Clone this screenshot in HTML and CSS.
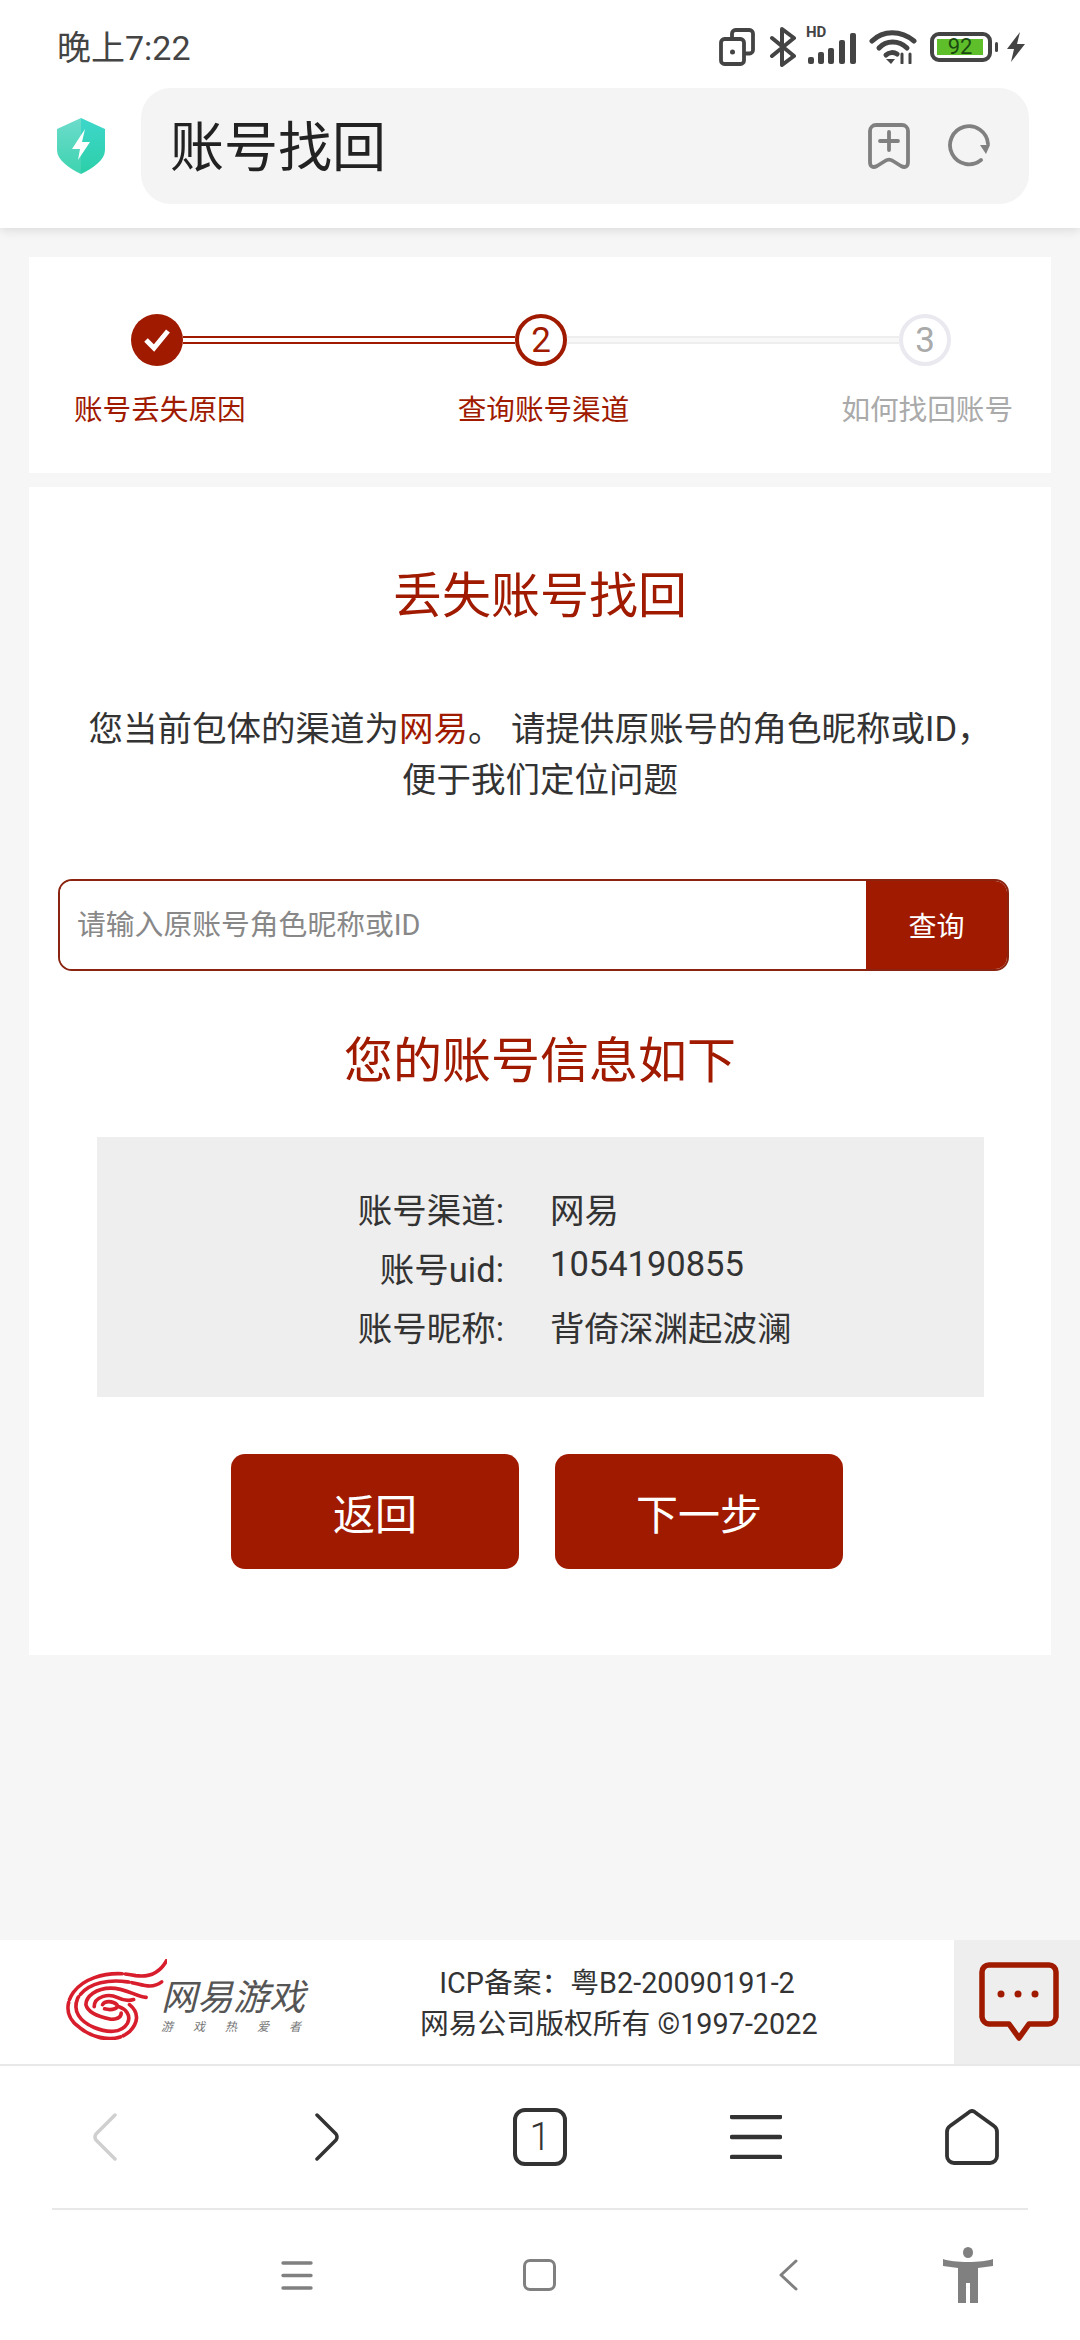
FILE: index.html
```html
<!DOCTYPE html>
<html lang="zh-CN">
<head>
    <meta charset="UTF-8">
    <meta name="viewport" content="width=device-width, initial-scale=1.0">
    <title>账号找回</title>
    <link rel="stylesheet" href="styles.css">
</head>
<body>
    <header class="browser-top">
        <div class="status-bar">
            <span class="status-time">晚上7:22</span>
            <div class="status-icons">
                <svg width="36" height="38" viewBox="0 0 36 38" fill="none" stroke="#444" stroke-width="3.8" stroke-linejoin="round" stroke-linecap="round">
                    <path d="M13 9V5.5A3.5 3.5 0 0 1 16.5 2H30.5A3.5 3.5 0 0 1 34 5.5V22A3.5 3.5 0 0 1 30.5 25.5H27"/>
                    <rect x="2" y="11" width="23" height="25" rx="3.5"/>
                    <circle cx="13.5" cy="24" r="2.5" fill="#444" stroke="none"/>
                </svg>
                <svg class="ic-bt" width="28" height="40" viewBox="0 0 28 40" fill="none" stroke="#444" stroke-width="4" stroke-linejoin="round" stroke-linecap="round">
                    <path d="M3 11L25 29L13 38V2L25 11L3 29"/>
                </svg>
                <div class="signal">
                    <span class="hd">HD</span>
                    <svg width="50" height="31" viewBox="0 0 50 31" fill="#444">
                        <rect x="1" y="24" width="6" height="7" rx="2"/>
                        <rect x="11" y="19" width="6" height="12" rx="2"/>
                        <rect x="21" y="15" width="6" height="16" rx="2"/>
                        <rect x="32" y="7" width="6" height="24" rx="2"/>
                        <rect x="43" y="0" width="6" height="31" rx="2"/>
                    </svg>
                </div>
                <svg class="ic-wifi" width="48" height="34" viewBox="0 0 48 34" fill="none" stroke="#444" stroke-width="5" stroke-linecap="round">
                    <path d="M3 11C14 0 32 0 45 11"/>
                    <path d="M10 18C17 10 30 10 38 18"/>
                    <path d="M17 25C20 22 25 22 28 24"/>
                    <path d="M17 29L22 34L26 29Z" fill="#444" stroke="none"/>
                    <path d="M33 24V33M41 24V33" stroke-width="3"/>
                </svg>
                <div class="battery">
                    <div class="battery-fill">92</div>
                </div>
                <span class="battery-nub"></span>
                <svg class="ic-bolt" width="20" height="30" viewBox="0 0 20 30" fill="#444">
                    <path d="M14 0L1 17H8L5 30L19 12H11Z"/>
                </svg>
            </div>
        </div>
        <div class="address-row">
            <svg class="shield" width="48" height="56" viewBox="0 0 48 56">
                <defs>
                    <linearGradient id="shieldLeft" x1="0" y1="0" x2="0" y2="1">
                        <stop offset="0" stop-color="#6ddccb"/>
                        <stop offset="1" stop-color="#3dd3b0"/>
                    </linearGradient>
                    <linearGradient id="shieldRight" x1="0" y1="0" x2="0" y2="1">
                        <stop offset="0" stop-color="#3ed7cb"/>
                        <stop offset="1" stop-color="#2ccfa8"/>
                    </linearGradient>
                </defs>
                <path d="M24 0L48 11V32C48 42 36 50 24 56Z" fill="url(#shieldRight)"/>
                <path d="M24 0L0 11V32C0 42 12 50 24 56Z" fill="url(#shieldLeft)"/>
                <path d="M28 11L15 31H23L21 42L33 24H25Z" fill="#fff"/>
            </svg>
            <div class="address-bar">
                <span class="address-title">账号找回</span>
                <svg width="42" height="46" viewBox="0 0 42 46" fill="none" stroke="#808080" stroke-width="3.8" stroke-linejoin="round" stroke-linecap="round">
                    <path d="M2 8A6 6 0 0 1 8 2H34A6 6 0 0 1 40 8V39C40 44 37 45 33 43L25 38C22 36 20 36 17 38L9 43C5 45 2 44 2 39Z"/>
                    <path d="M21 9V27M12 18H30"/>
                </svg>
                <svg class="ic-refresh" width="44" height="44" viewBox="0 0 44 44" fill="none" stroke="#808080" stroke-width="3.8" stroke-linecap="round">
                    <path d="M33 36A19 19 0 1 1 40 20"/>
                    <path d="M32 21H42L38 30Z" fill="#808080" stroke="none"/>
                </svg>
            </div>
        </div>
    </header>

    <main class="page">
        <section class="card steps">
            <div class="step-track">
                <span class="step-dot done">
                    <svg width="26" height="24" viewBox="0 0 26 24" fill="none" stroke="#fff" stroke-width="5"><path d="M2 12L10 20L24 3"/></svg>
                </span>
                <span class="step-line on"></span>
                <span class="step-dot current">2</span>
                <span class="step-line"></span>
                <span class="step-dot todo">3</span>
            </div>
            <div class="step-labels">
                <span class="on">账号丢失原因</span>
                <span class="on">查询账号渠道</span>
                <span>如何找回账号</span>
            </div>
        </section>

        <section class="card form-card">
            <h2>丢失账号找回</h2>
            <p class="intro">您当前包体的渠道为<span class="red">网易</span>。 请提供原账号的角色昵称或ID，<br>便于我们定位问题</p>
            <div class="search">
                <input type="text" placeholder="请输入原账号角色昵称或ID">
                <button>查询</button>
            </div>
            <h2 class="info-title">您的账号信息如下</h2>
            <div class="info-box">
                <div class="info-row"><span class="k">账号渠道:</span><span class="v">网易</span></div>
                <div class="info-row uid"><span class="k">账号uid:</span><span class="v">1054190855</span></div>
                <div class="info-row"><span class="k">账号昵称:</span><span class="v">背倚深渊起波澜</span></div>
            </div>
            <div class="actions">
                <button>返回</button>
                <button>下一步</button>
            </div>
        </section>
    </main>

    <footer class="site-footer">
        <div class="logo">
            <svg width="102" height="81" viewBox="2 0 98 78" fill="none" stroke="#d81e2c" stroke-width="3.5" stroke-linecap="round">
                <path d="M100 1C94 12 84 18 70 16C48 11 22 16 10 32C1 45 4 58 16 66C28 76 50 82 64 70C72 62 74 52 64 44" stroke-dasharray="46 3 60 3 70 3 200"/>
                <path d="M95 22C84 30 76 24 62 22C42 19 22 24 14 38C9 50 16 60 30 66C42 71 56 72 62 62C66 54 60 48 54 46" stroke-dasharray="30 3 50 3 200"/>
                <path d="M80 37C70 36 60 28 46 28C32 28 22 36 22 44C24 52 36 56 46 58C52 58 56 56 56 52"/>
                <path d="M30 46C30 36 44 33 52 37C58 40 62 41 68 39"/>
                <path d="M38 44C40 40 48 40 52 44C54 47 48 50 40 48"/>
            </svg>
            <div class="logo-text">
                <span class="logo-name">网易游戏</span>
                <span class="logo-slogan">游戏热爱者</span>
            </div>
        </div>
        <div class="footer-text">
            <div>ICP备案：粤B2-20090191-2</div>
            <div>网易公司版权所有 ©1997-2022</div>
        </div>
        <div class="chat-box">
            <svg width="80" height="80" viewBox="0 0 80 80" fill="none" stroke="#a01a00" stroke-width="5.5" stroke-linejoin="round">
                <path d="M10 3H70A7 7 0 0 1 77 10V55A8 8 0 0 1 69 62H50L40 76L30 62H10A8 8 0 0 1 3 55V10A7 7 0 0 1 10 3Z"/>
                <circle cx="22" cy="32" r="3.5" fill="#a01a00" stroke="none"/>
                <circle cx="39" cy="32" r="3.5" fill="#a01a00" stroke="none"/>
                <circle cx="56" cy="32" r="3.5" fill="#a01a00" stroke="none"/>
            </svg>
        </div>
    </footer>

    <nav class="browser-nav">
        <div class="nav-inner">
            <svg class="nav-back" width="26" height="48" viewBox="0 0 26 48" fill="none" stroke="#cfcfcf" stroke-width="3.5" stroke-linecap="round" stroke-linejoin="round"><path d="M23 2L4 21Q2 24 4 27L23 46"/></svg>
            <svg class="nav-forward" width="26" height="48" viewBox="0 0 26 48" fill="none" stroke="#333" stroke-width="3.5" stroke-linecap="round" stroke-linejoin="round"><path d="M3 2L22 21Q24 24 22 27L3 46"/></svg>
            <div class="tab-count">1</div>
            <svg class="nav-menu" width="52" height="44" viewBox="0 0 52 44" fill="none" stroke="#333" stroke-width="4.5" stroke-linecap="round"><path d="M2 2H50M2 22H50M2 42H50"/></svg>
            <svg class="nav-home" width="54" height="56" viewBox="0 0 54 56" fill="none" stroke="#333" stroke-width="3.8" stroke-linejoin="round"><path d="M23 4Q27 0 31 4L49 17Q52 19 52 23V47A7 7 0 0 1 45 54H9A7 7 0 0 1 2 47V23Q2 19 5 17Z"/></svg>
        </div>
    </nav>

    <div class="system-nav">
        <svg width="32" height="29" viewBox="0 0 32 29" fill="none" stroke="#808080" stroke-width="3.4" stroke-linecap="round"><path d="M2 2H30M2 14.5H30M2 27H30"/></svg>
        <span class="sys-home"></span>
        <svg class="sys-back" width="20" height="32" viewBox="0 0 20 32" fill="none" stroke="#808080" stroke-width="3" stroke-linecap="round" stroke-linejoin="round"><path d="M18 2L3 16L18 30"/></svg>
        <svg class="sys-person" width="50" height="56" viewBox="0 0 50 56" fill="#808080">
            <ellipse cx="25" cy="5.5" rx="5" ry="5.5"/>
            <path d="M0 12C10 16 40 16 50 12V19L35 21V56H27V36H23V56H15V21L0 19Z"/>
        </svg>
    </div>
</body>
</html>
```

FILE: styles.css
```css
* { box-sizing: border-box; }
html, body { margin: 0; height: 100%; }
body { width: 1080px; height: 2340px; display: flex; flex-direction: column; background: #f6f6f6; color: #333; font-family: Roboto, "Noto Sans CJK SC", sans-serif; overflow: hidden; }
svg { display: block; flex: none; }

/* browser chrome, top */
.browser-top { height: 228px; background: #fff; box-shadow: 0 2px 10px rgba(0, 0, 0, 0.12); position: relative; }
.status-bar { height: 88px; display: flex; justify-content: space-between; align-items: center; padding: 6px 54px 0 57px; }
.status-time { font-size: 34px; color: #444; margin-bottom: 3px; }
.status-icons { display: flex; align-items: center; }
.ic-bt { margin-left: 14px; }
.signal { position: relative; margin-left: 10px; padding-top: 3px; }
.hd { position: absolute; left: -1px; top: -5px; font-size: 15px; font-weight: 700; color: #444; line-height: 15px; }
.ic-wifi { margin-left: 12px; }
.battery { width: 62px; height: 30px; margin-left: 13px; border: 4px solid #444; border-radius: 9px; padding: 3px; }
.battery-fill { width: 46px; height: 16px; background: #5fbf2a; color: #1a4a12; font-size: 22px; line-height: 16px; text-align: center; }
.battery-nub { width: 3px; height: 10px; margin-left: 3px; background: #444; border-radius: 2px; }
.ic-bolt { margin-left: 8px; }

.address-row { display: flex; align-items: center; padding: 0 51px 0 57px; }
.address-bar { flex: 1; height: 116px; margin-left: 36px; padding: 0 37px 0 29px; background: #f4f4f4; border-radius: 30px; display: flex; align-items: center; }
.address-title { flex: 1; font-size: 54px; color: #222; padding-bottom: 5px; }
.ic-refresh { margin-left: 38px; }

/* page */
.page { flex: 1; padding: 29px 29px 0; }
.card { background: #fff; }
.steps { height: 216px; padding-top: 57px; }
.step-track { display: flex; align-items: center; padding: 0 100px 0 102px; }
.step-dot { width: 52px; height: 52px; border-radius: 50%; flex: none; display: flex; align-items: center; justify-content: center; font-size: 35px; }
.step-dot.done { background: #a01a00; }
.step-dot.current { border: 4px solid #a01a00; color: #a01a00; }
.step-dot.todo { border: 4px solid #e9e9ef; color: #aaa; }
.step-line { flex: 1; height: 8px; border-top: 2px solid #eee; border-bottom: 2px solid #eee; background: #f8f8f8; }
.step-line.on { border-color: #a01a00; background: #fff; }
.step-labels { display: flex; justify-content: space-between; margin-top: 24px; padding: 0 38px 0 45px; font-size: 28.6px; line-height: 40px; color: #aaa; }
.step-labels .on { color: #a01a00; }

.form-card { margin-top: 14px; padding: 80px 0 86px; text-align: center; }
h2 { margin: 0; font-size: 49px; line-height: 60px; font-weight: 400; color: #a01a00; }
.intro { margin: 77px 0 0; font-size: 34.5px; line-height: 51px; color: #333; }
.red { color: #a01a00; }
.search { display: flex; height: 92px; margin: 73px 42px 0 29px; border: 2px solid #8a2410; border-radius: 14px; overflow: hidden; }
.search input { flex: 1; min-width: 0; border: none; outline: none; padding: 0 17px; font: 28.8px Roboto, "Noto Sans CJK SC", sans-serif; color: #333; }
.search input::placeholder { color: #888; }
.search button { width: 141px; padding-left: 6px; border: none; background: #a01a00; color: #fff; font: 28px Roboto, "Noto Sans CJK SC", sans-serif; }
.info-title { margin-top: 61px; }
.info-box { height: 260px; margin: 45px 67px 0 68px; padding-top: 41px; background: #eee; }
.info-row { display: flex; height: 59px; align-items: center; font-size: 34.5px; color: #333; }
.info-row.uid .v { padding-bottom: 5px; }
.k { width: 407px; text-align: right; }
.v { margin-left: 46px; }
.actions { display: flex; justify-content: center; gap: 36px; margin-top: 57px; padding-right: 6px; }
.actions button { width: 288px; height: 115px; border: none; border-radius: 14px; background: #a01a00; color: #fff; font: 42px Roboto, "Noto Sans CJK SC", sans-serif; }

/* site footer */
.site-footer { height: 126px; display: flex; background: #fff; border-bottom: 2px solid #e8e8e8; }
.logo { width: 420px; display: flex; padding: 19px 0 0 65px; }
.logo-text { display: flex; flex-direction: column; margin: 21px 0 0 -6px; }
.logo-name { font-size: 36px; line-height: 36px; color: #555; font-style: italic; }
.logo-slogan { margin-top: 3px; font-size: 12px; line-height: 16px; color: #777; font-style: italic; letter-spacing: 20px; white-space: nowrap; }
.footer-text { width: 394px; padding-top: 23px; text-align: center; font-size: 28.8px; line-height: 41px; color: #333; white-space: nowrap; }
.chat-box { width: 126px; margin-left: auto; background: #eee; padding: 22px 0 0 25px; }

/* browser chrome, bottom */
.browser-nav { height: 144px; padding: 0 52px; background: #fff; }
.nav-inner { height: 100%; display: flex; align-items: center; border-bottom: 2px solid #e8e8e8; }
.nav-back { margin-left: 40px; }
.nav-forward { margin-left: 196px; }
.tab-count { width: 54px; height: 58px; margin-left: 173px; border: 4px solid #333; border-radius: 12px; text-align: center; font-size: 38px; font-weight: 300; line-height: 50px; color: #333; }
.nav-menu { margin-left: 163px; }
.nav-home { margin-left: 163px; }
.system-nav { height: 130px; background: #fff; display: flex; align-items: center; padding-left: 281px; }
.sys-home { width: 33px; height: 32px; margin-left: 210px; border: 3.5px solid #808080; border-radius: 7px; }
.sys-back { margin-left: 222px; }
.sys-person { margin-left: 145px; }
```
